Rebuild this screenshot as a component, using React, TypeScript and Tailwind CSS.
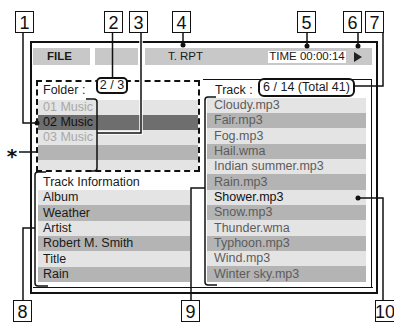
import React from "react";

//    ====== File screen (manual diagram) ======

const TRACKS = [
  "Cloudy.mp3",
  "Fair.mp3",
  "Fog.mp3",
  "Hail.wma",
  "Indian summer.mp3",
  "Rain.mp3",
  "Shower.mp3",
  "Snow.mp3",
  "Thunder.wma",
  "Typhoon.mp3",
  "Wind.mp3",
  "Winter sky.mp3",
];

const TRACK_INFO = ["Album", "Weather", "Artist", "Robert M. Smith", "Title", "Rain"];

const CURRENT_TRACK = 6;

// callout boxes: number, x, y
const CALLOUTS: { n: string; x: number; y: number }[] = [
  { n: "1", x: 15, y: 11 },
  { n: "2", x: 104, y: 11 },
  { n: "3", x: 129, y: 11 },
  { n: "4", x: 172, y: 11 },
  { n: "5", x: 297, y: 11 },
  { n: "6", x: 343, y: 11 },
  { n: "7", x: 365, y: 11 },
  { n: "8", x: 13, y: 300 },
  { n: "9", x: 181, y: 300 },
  { n: "10", x: 375, y: 300 },
];

const Callouts = () => (
  <svg
    className="absolute left-0 top-0 pointer-events-none"
    width={394}
    height={322}
    viewBox="0 0 394 322"
  >
    <g fill="none" stroke="#111" strokeWidth={1.5}>
      {/* 1 */}
      <path d="M23 32 V123 H37" />
      {/* 2 */}
      <path d="M112.5 32 V78" />
      {/* 3 */}
      <path d="M141 32 V133 H97" stroke="#fff" strokeWidth={3.5} />
      <path d="M141 32 V133 H97" />
      <path d="M86 99 H94 Q97 99 97 102 V168 Q97 171 94 171 H88" />
      {/* 4 5 6 */}
      <path d="M183 32 V45" />
      <path d="M307 32 V46" />
      <path d="M358 32 V46" />
      {/* 7 */}
      <path d="M383 32 V86 H355" />
      {/* * */}
      <path d="M19 152 H36" />
      {/* 8 */}
      <path d="M23 300 V228 H35" />
      <path d="M46 172 H38 Q35 172 35 175 V283 Q35 286 38 286 H48" />
      {/* 9 */}
      <path d="M191 300 V188 H205" />
      <path d="M216 97 H208 Q205 97 205 100 V282 Q205 285 208 285 H217" />
      {/* 10 */}
      <path d="M358 198 H383 V300" />
    </g>
    <g fill="#111">
      <circle cx={37} cy={123} r={2.5} />
      <circle cx={183} cy={45} r={2.5} />
      <circle cx={307} cy={46} r={2.5} />
      <circle cx={358} cy={46} r={2.5} />
      <circle cx={358} cy={198} r={2.5} />
    </g>
    <text x={12} y={163} fontFamily="'DejaVu Sans', sans-serif" fontSize={20} fontWeight="bold" textAnchor="middle" fill="#111">
      *
    </text>
    {CALLOUTS.map((c) => (
      <g key={c.n}>
        <rect x={c.x + 0.5} y={c.y + 0.5} width={c.n.length > 1 ? 19 : 18} height={21} fill="#fff" stroke="#111" strokeWidth={1} />
        <text
          x={c.x + (c.n.length > 1 ? 10 : 9.5)}
          y={c.y + 18}
          fontFamily="'Liberation Sans', Arial, sans-serif"
          fontSize={18}
          textAnchor="middle"
          fill="#111"
        >
          {c.n}
        </text>
      </g>
    ))}
  </svg>
);

const App: React.FC = () => {
  return (
    <div className="relative w-[394px] h-[322px] overflow-hidden bg-white pt-[41px] pl-[30px] font-['Liberation_Sans',Arial,sans-serif] text-[#1a1a1a]">
      {/* Khung màn hình */}
      <div className="w-[348px] h-[253px] border-2 border-[#111]">
        {/* Header */}
        <div className="mt-[5px] ml-[1px] flex h-[17px]">
          <div className="w-[57px] bg-[#c8c8c8] pl-[14px] flex items-center text-[11.5px] font-bold leading-none">
            FILE
          </div>
          <div className="ml-[5px] w-[43px] bg-[#c8c8c8]" />
          <div className="ml-[7px] w-[227px] bg-[#c8c8c8] flex items-center text-[11.5px] leading-none">
            <span className="w-[77px] pl-[4px] text-center">T. RPT</span>
            <span className="ml-[46px] w-[78px] h-[12px] bg-white flex items-center justify-center">
              TIME 00:00:14
            </span>
            <svg className="ml-[8px]" width="8" height="10" viewBox="0 0 8 10">
              <polygon points="0,0 8,5 0,10" fill="#222" />
            </svg>
          </div>
        </div>

        {/* Body */}
        <div className="ml-[1px] w-[340px] h-[223px] border-b border-[#111] flex">
          {/* Cột trái */}
          <div className="w-[170px] flex flex-col">
            <div className="ml-[3px] mt-[15px] w-[164px] h-[92px] border-2 border-dashed border-[#111] flex flex-col text-[12.5px] leading-none">
              <div className="h-[18px] flex items-start bg-white">
                <span className="w-[58px] pl-[5px] pt-[2px]">Folder :</span>
                <span className="-mt-[5px] w-[32px] h-[17px] border-2 border-[#111] rounded-[5px] bg-white flex items-center justify-center relative">
                  2 / 3
                </span>
              </div>
              <div className="h-[15px] bg-[#e4e4e4] pl-[5px] flex items-center text-[#a8a8a8]">01 Music</div>
              <div className="h-[15px] bg-[#6e6e6e] pl-[5px] flex items-center text-[#111]">02 Music</div>
              <div className="h-[15px] bg-[#e4e4e4] pl-[5px] flex items-center text-[#a8a8a8]">03 Music</div>
              <div className="h-[15px] bg-[#b4b4b4]" />
              <div className="h-[10px] bg-[#e4e4e4]" />
            </div>

            {/* Track Information */}
            <div className="ml-[5px] mt-[3px] w-[152px] flex flex-col text-[12.5px] leading-none">
              {["Track Information", ...TRACK_INFO].map((t, i) => (
                <div
                  key={t}
                  className={`pl-[5px] flex items-center ${i % 3 === 2 ? "h-[16px]" : "h-[15px]"} ${
                    i === 0 ? "bg-white" : i % 2 === 1 ? "bg-[#e4e4e4]" : "bg-[#b4b4b4]"
                  }`}
                >
                  {t}
                </div>
              ))}
            </div>
          </div>

          {/* Danh sách track */}
          <div className="mt-[14px] w-[169px] h-[208px] border-t border-r border-[#111] flex flex-col text-[12.5px] leading-none">
            <div className="h-[18px] flex items-start">
              <span className="w-[55px] pl-[12px] pt-[4px]">Track :</span>
              <span className="-mt-[2px] w-[97px] h-[19px] border-2 border-[#111] rounded-[6px] bg-white flex items-center justify-center">
                6 / 14 (Total 41)
              </span>
            </div>
            <div className="ml-[4px] w-[159px] flex flex-col">
              {TRACKS.map((t, i) => (
                <div
                  key={t}
                  className={`pl-[7px] flex items-center ${i % 3 === 2 ? "h-[16px]" : "h-[15px]"} ${
                    i % 2 === 0 ? "bg-[#e4e4e4]" : "bg-[#b4b4b4]"
                  } ${i === CURRENT_TRACK ? "text-[#111]" : "text-[#5c5c5c]"}`}
                >
                  {t}
                </div>
              ))}
            </div>
          </div>
        </div>
      </div>

      <Callouts />
    </div>
  );
};

export default App;
